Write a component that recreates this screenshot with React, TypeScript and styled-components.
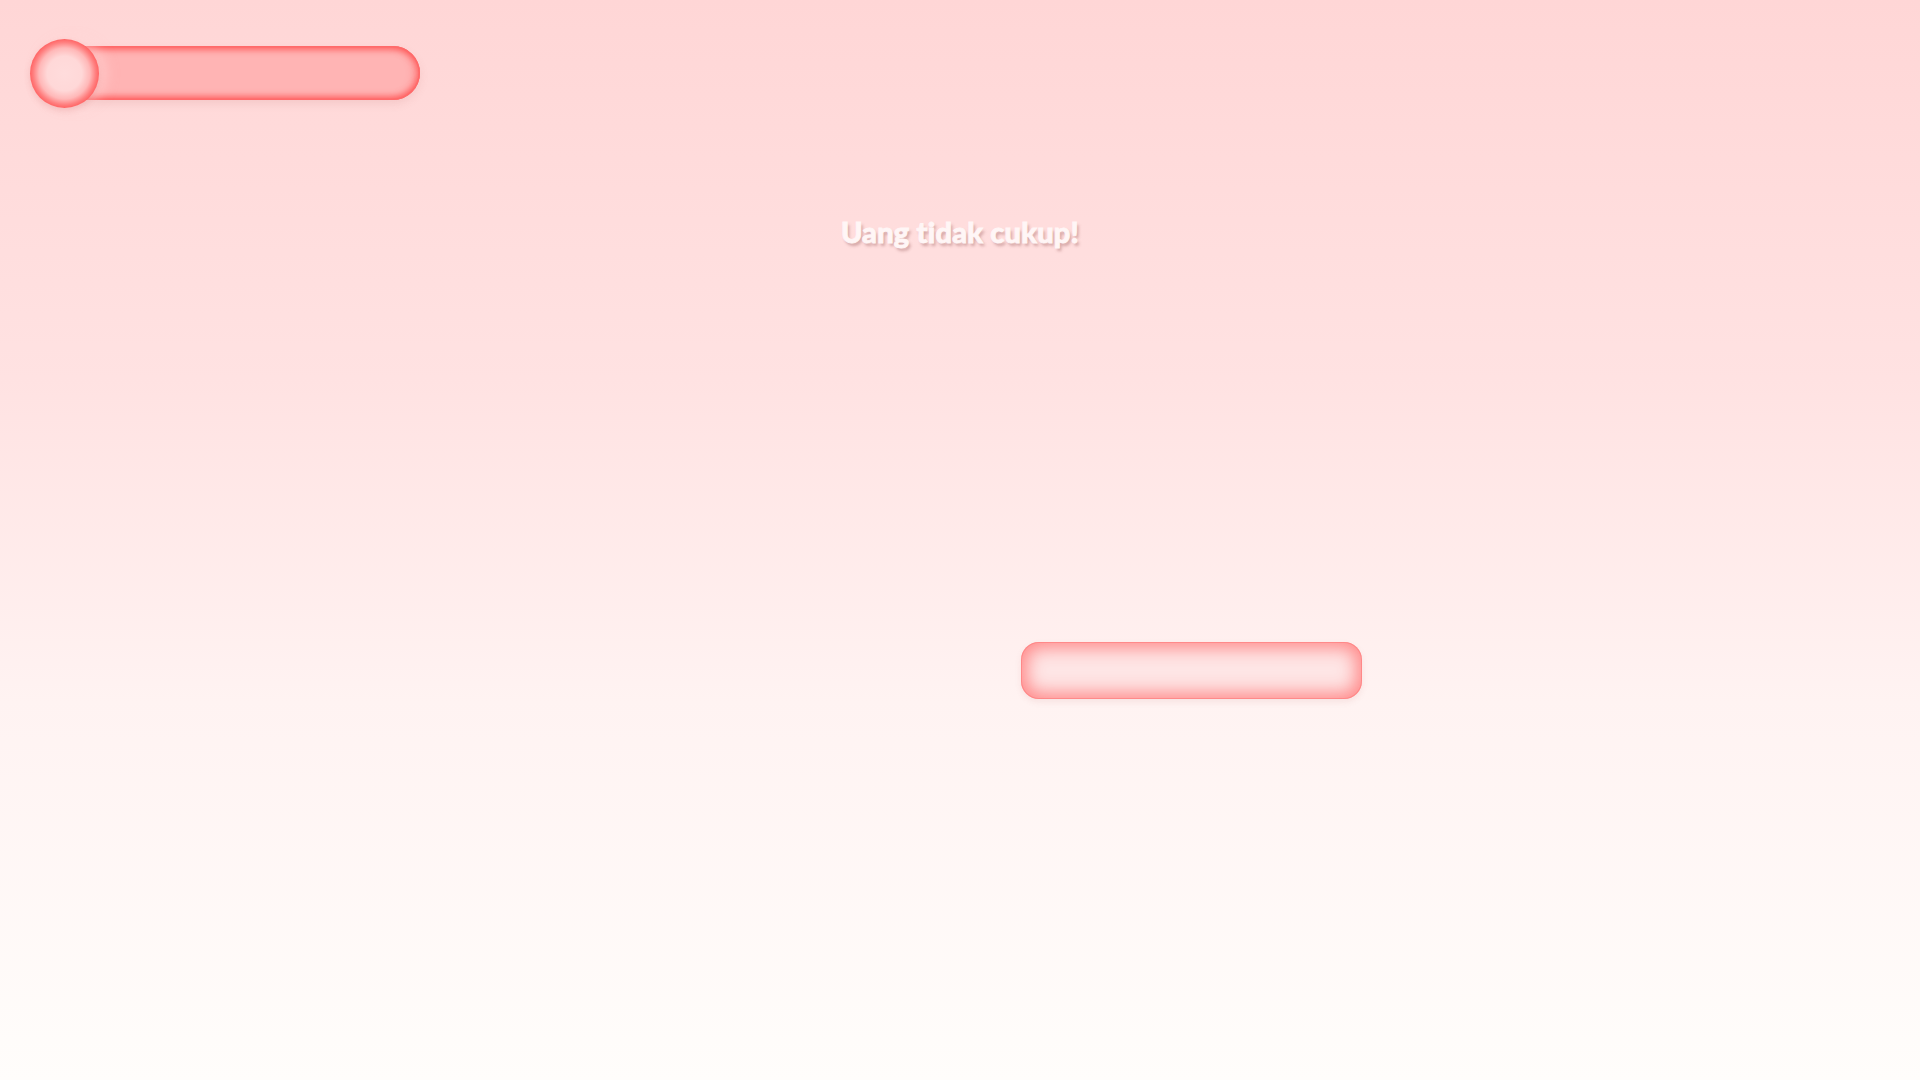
import React from 'react'
import styled, { createGlobalStyle } from 'styled-components'

const GlobalStyle = createGlobalStyle`
  html, body {
    margin: 0;
    padding: 0;
    height: 100%;
  }
  body {
    font-family: Lato, 'Open Sans', sans-serif;
    background: linear-gradient(180deg, #ffd6d6 0%, #ffe2e2 35%, #fff3f2 65%, #fffdfb 100%);
  }
  #root {
    min-height: 100vh;
  }
`

const Screen = styled.div`
  width: 1920px;
  height: 1080px;
  display: flex;
  flex-direction: column;
  box-sizing: border-box;
  padding-top: 38px;
`

const Meter = styled.div`
  display: flex;
  align-items: center;
  padding-left: 30px;
  height: 70px;
`

const Orb = styled.div`
  position: relative;
  z-index: 1;
  flex: none;
  width: 69px;
  height: 69px;
  border-radius: 50%;
  background: radial-gradient(circle closest-side, #ffdcdc 0%, #ffd8d8 50%, #ffb8b8 74%, #ff8080 90%, #ff6464 100%);
  box-shadow: 0 3px 6px rgba(200, 90, 90, 0.2), 8px 0 12px rgba(255, 215, 215, 0.5);
`

const Track = styled.div`
  flex: none;
  width: 361px;
  height: 54px;
  margin-left: -40px;
  border-radius: 27px;
  background: #ffb4b4;
  box-shadow:
    inset 0 0 0 1.5px #ff6a6a,
    inset 0 6px 6px -2px rgba(255, 85, 85, 0.8),
    inset 0 -6px 6px -2px rgba(255, 85, 85, 0.8),
    inset -7px 0 8px -3px rgba(255, 85, 85, 0.65),
    0 4px 8px rgba(190, 110, 110, 0.15);
`

const Message = styled.div`
  margin-top: 106px;
  text-align: center;
  font-size: 29px;
  line-height: 36px;
  font-weight: 900;
  color: #fff6f6;
  -webkit-text-stroke: 0.8px #fff6f6;
  letter-spacing: 0.2px;
  text-shadow: 2px 3px 3px rgba(160, 100, 100, 0.45);
`

const Actions = styled.div`
  margin-top: 392px;
  display: flex;
  justify-content: center;
  gap: 122px;
`

const SoftButton = styled.button<{ $hidden?: boolean }>`
  width: 341px;
  height: 57px;
  border: none;
  border-radius: 18px;
  padding: 0;
  visibility: ${({ $hidden }) => ($hidden ? 'hidden' : 'visible')};
  background: #fee6e6;
  box-shadow:
    inset 0 0 18px 6px rgba(255, 120, 120, 0.85),
    inset 0 0 0 1px rgba(255, 140, 140, 0.7),
    0 3px 6px rgba(190, 110, 110, 0.12);
  cursor: pointer;
`

export default function App() {
  return (
    <>
      <GlobalStyle />
      <Screen>
        <Meter>
          <Orb />
          <Track />
        </Meter>
        <Message>Uang tidak cukup!</Message>
        <Actions>
          <SoftButton $hidden />
          <SoftButton />
        </Actions>
      </Screen>
    </>
  )
}
